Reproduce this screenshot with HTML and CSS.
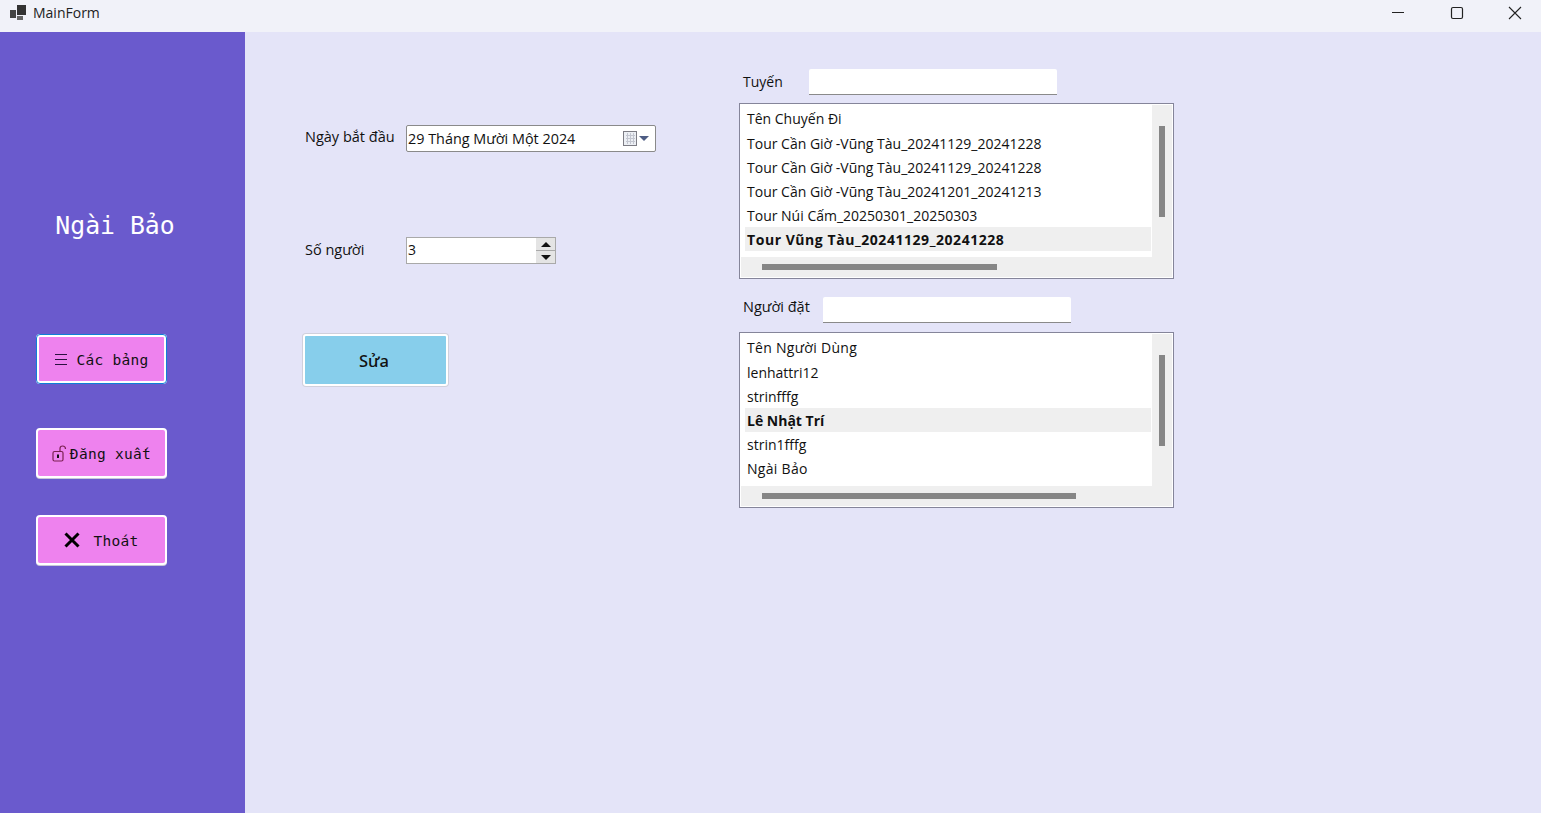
FILE: index.html
```html
<!DOCTYPE html>
<html lang="vi">
<head>
    <meta charset="UTF-8">
    <title>MainForm</title>
    <link rel="stylesheet" href="styles.css">
</head>
<body>
    <div class="titlebar">
        <svg class="app-icon" width="16" height="16" viewBox="0 0 16 16">
            <rect x="0" y="5" width="6" height="8" fill="#444"/>
            <rect x="7" y="0" width="9" height="10" fill="#333"/>
            <rect x="7" y="11" width="6" height="4" fill="#666"/>
        </svg>
        <span class="app-title">MainForm</span>
        <div class="win-controls">
            <div class="win-btn">
                <svg width="14" height="14" viewBox="0 0 14 14"><path d="M1 6.500H13" stroke="#222" fill="none"/></svg>
            </div>
            <div class="win-btn">
                <svg width="14" height="14" viewBox="0 0 14 14"><rect x="1.500" y="1.500" width="11" height="11" rx="1.500" stroke="#222" stroke-width="1.200" fill="none"/></svg>
            </div>
            <div class="win-btn">
                <svg width="14" height="14" viewBox="0 0 14 14"><path d="M1 1L13 13M13 1L1 13" stroke="#222" stroke-width="1.100" fill="none"/></svg>
            </div>
        </div>
    </div>

    <div class="main">
        <div class="sidebar">
            <div class="user-name">Ngài Bảo</div>
            <button class="side-btn active">
                <svg width="14" height="13" viewBox="0 0 14 13"><path d="M1 1.500H13M1 6.500H13M1 11.500H13" stroke="#2a1040" fill="none"/></svg>
                <span class="side-text gap-menu">Các bảng</span>
            </button>
            <button class="side-btn second">
                <svg width="16" height="17" viewBox="0 0 16 17"><rect x="1" y="6.500" width="10" height="9.500" rx="1.500" stroke="#7a2050" stroke-width="1.200" fill="none"/><path d="M8 6V3.500C8 1.500 9.500 1 10.500 1C12 1 13.500 2 13.500 4" stroke="#7a2050" stroke-width="1.200" fill="none"/><path d="M6 9.500V13" stroke="#111" stroke-width="2" fill="none"/></svg>
                <span class="side-text gap-lock">Đăng xuất</span>
            </button>
            <button class="side-btn third">
                <svg width="16" height="16" viewBox="0 0 16 16"><path d="M1.500 1.500L14.500 14.500M14.500 1.500L1.500 14.500" stroke="#000" stroke-width="3" fill="none"/></svg>
                <span class="side-text gap-exit">Thoát</span>
            </button>
        </div>

        <div class="content">
            <div class="left-col">
                <div class="field-row">
                    <label class="field-label label-date">Ngày bắt đầu</label>
                    <div class="date-box">
                        <span class="date-value">29 Tháng Mười Một 2024</span>
                        <svg width="15" height="15" viewBox="0 0 15 15">
                            <rect x="0.500" y="0.500" width="13" height="14" fill="#eceff4" stroke="#7c7c84"/>
                            <path d="M3 4.500H12M3 7.500H12M3 10.500H12M4.500 2V13M7.500 2V13M10.500 2V13" stroke="#c3c6d0" fill="none"/>
                        </svg>
                        <span class="date-arrow"></span>
                    </div>
                </div>
                <div class="field-row spin-row">
                    <label class="field-label label-spin">Số người</label>
                    <div class="spin-box">
                        <span class="spin-value">3</span>
                        <div class="spin-btns">
                            <div class="spin-btn"><span class="arrow-up"></span></div>
                            <div class="spin-btn"><span class="arrow-down"></span></div>
                        </div>
                    </div>
                </div>
                <button class="edit-btn">Sửa</button>
            </div>

            <div class="right-col">
                <div class="search-row">
                    <label class="search-label label-route">Tuyến</label>
                    <input class="search-input" type="text">
                </div>
                <div class="list-box">
                    <div class="list-body">
                        <div class="list-row first">Tên Chuyến Đi</div>
                        <div class="list-row">Tour Cần Giờ -Vũng Tàu_20241129_20241228</div>
                        <div class="list-row">Tour Cần Giờ -Vũng Tàu_20241129_20241228</div>
                        <div class="list-row">Tour Cần Giờ -Vũng Tàu_20241201_20241213</div>
                        <div class="list-row">Tour Núi Cấm_20250301_20250303</div>
                        <div class="list-row selected spaced">Tour Vũng Tàu_20241129_20241228</div>
                    </div>
                    <div class="vscroll"><div class="vthumb"></div></div>
                    <div class="hscroll"><div class="hthumb route-thumb"></div></div>
                </div>

                <div class="search-row second-search">
                    <label class="search-label label-booker">Người đặt</label>
                    <input class="search-input" type="text">
                </div>
                <div class="list-box">
                    <div class="list-body">
                        <div class="list-row first wide">Tên Người Dùng</div>
                        <div class="list-row">lenhattri12</div>
                        <div class="list-row">strinfffg</div>
                        <div class="list-row selected">Lê Nhật Trí</div>
                        <div class="list-row">strin1fffg</div>
                        <div class="list-row wide">Ngài Bảo</div>
                    </div>
                    <div class="vscroll"><div class="vthumb"></div></div>
                    <div class="hscroll"><div class="hthumb user-thumb"></div></div>
                </div>
            </div>
        </div>
    </div>
</body>
</html>
```

FILE: styles.css
```css
* {
    box-sizing: border-box;
}
body {
    margin: 0;
    height: 813px;
    overflow: hidden;
    font-family: "Open Sans", "Noto Sans", sans-serif;
    font-size: 14px;
    color: #111;
    background-color: #e4e4f8;
}
.titlebar {
    display: flex;
    align-items: center;
    height: 32px;
    padding-left: 10px;
    background-color: #f1f2f9;
}
.app-icon {
    margin-top: -6px;
}
.app-title {
    margin-left: 7px;
    margin-top: -8px;
    color: #222;
}
.win-controls {
    display: flex;
    gap: 44.5px;
    margin-left: auto;
    padding-right: 19px;
    margin-top: -6px;
}
.win-btn {
    display: flex;
    justify-content: center;
    width: 14px;
}
.main {
    display: flex;
    height: 781px;
}
.sidebar {
    display: flex;
    flex-direction: column;
    align-items: flex-start;
    width: 245px;
    padding-left: 36px;
    background-color: #6a5acd;
}
.user-name {
    width: 158px;
    margin-top: 177px;
    height: 33px;
    line-height: 33px;
    text-align: center;
    color: #fff;
    font-family: "DejaVu Sans Mono", monospace;
    font-size: 24.8px;
}
.side-btn {
    display: flex;
    align-items: center;
    justify-content: center;
    width: 131px;
    height: 50px;
    padding: 2px 0 0;
    background-color: #ee82ee;
    border: 2px solid #fff;
    border-radius: 4px;
    color: #111;
    font-family: "DejaVu Sans Mono", monospace;
    font-size: 14.5px;
    letter-spacing: 0.3px;
}
.side-btn svg {
    margin-top: -2px;
}
.side-btn.active {
    margin-top: 92px;
    border: 3px solid #fff;
    outline: 1px solid #0f7fd8;
    outline-offset: -1px;
}
.side-btn.second {
    margin-top: 44px;
    box-shadow: 0 1px 0 #c8c8d8;
}
.side-btn.third {
    margin-top: 37px;
    box-shadow: 0 1px 0 #c8c8d8;
}
.gap-menu {
    margin-left: 8px;
}
.gap-lock {
    margin-left: 2px;
}
.gap-exit {
    margin-left: 13px;
}
.content {
    display: flex;
    flex: 1;
    padding: 37px 0 0 58px;
}
.left-col {
    width: 436px;
    padding-top: 56px;
}
.field-row {
    display: flex;
    align-items: center;
    height: 27px;
    padding-left: 2px;
}
.spin-row {
    margin-top: 85px;
}
.field-label {
    width: 101px;
    font-size: 14.5px;
}
.label-date {
    margin-top: -5px;
}
.label-spin {
    margin-top: -2px;
}
.date-box {
    display: flex;
    align-items: center;
    width: 250px;
    height: 27px;
    padding: 0 6px 0 1px;
    background-color: #fff;
    border: 1px solid #8a8a8a;
    border-radius: 2px;
    font-size: 14.4px;
}
.date-value {
    flex: 1;
}
.date-arrow {
    margin-left: 1px;
    border-left: 5px solid transparent;
    border-right: 5px solid transparent;
    border-top: 5px solid #4e5d84;
}
.spin-box {
    display: flex;
    align-items: center;
    width: 150px;
    height: 27px;
    padding-left: 1px;
    background-color: #fff;
    border: 1px solid #a9a9a9;
}
.spin-value {
    flex: 1;
    margin-top: -2px;
}
.spin-btns {
    display: flex;
    flex-direction: column;
    gap: 1px;
    width: 19px;
    height: 25px;
    background-color: #a9a9a9;
}
.spin-btn {
    display: flex;
    align-items: center;
    justify-content: center;
    flex: 1;
    background-color: #e4e4e4;
}
.arrow-up {
    border-left: 5px solid transparent;
    border-right: 5px solid transparent;
    border-bottom: 5px solid #111;
}
.arrow-down {
    border-left: 5px solid transparent;
    border-right: 5px solid transparent;
    border-top: 5px solid #111;
}
.edit-btn {
    display: block;
    width: 145px;
    height: 52px;
    margin-top: 70px;
    padding: 0 3px 0 0;
    background-color: #87ceeb;
    border: 2px solid #fff;
    border-radius: 3px;
    box-shadow: 0 0 0 1px #d0d0dc;
    color: #111;
    font-family: "Noto Sans", sans-serif;
    font-size: 16.5px;
    font-weight: 500;
}
.right-col {
    width: 435px;
}
.search-row {
    display: flex;
    align-items: center;
    height: 26px;
    margin-bottom: 8px;
    padding-left: 4px;
}
.second-search {
    margin-top: 18px;
    margin-bottom: 9px;
}
.search-label {
    flex-shrink: 0;
    font-size: 14.5px;
}
.label-route {
    width: 66px;
    margin-top: -1px;
    font-size: 14px;
}
.label-booker {
    width: 80px;
    margin-top: -7px;
}
.search-input {
    width: 248px;
    height: 26px;
    padding: 0 3px;
    background-color: #fff;
    border: 0;
    border-bottom: 1px solid #8a8a8a;
    border-radius: 2px 2px 0 0;
}
.list-box {
    display: grid;
    grid-template-columns: 411px 20px;
    grid-template-rows: 152px 20px;
    width: 435px;
    height: 176px;
    padding: 1px;
    background-color: #fff;
    border: 1px solid #85859a;
}
.list-body {
    padding-top: 1px;
    background-color: #fff;
}
.list-row {
    height: 24px;
    margin: 0 1px 0 4px;
    padding-left: 2px;
    line-height: 26px;
    white-space: nowrap;
}
.list-row.first {
    height: 25px;
}
.list-row.wide {
    letter-spacing: 0.3px;
}
.list-row.selected {
    background-color: #efefef;
    font-weight: 700;
}
.list-row.spaced {
    letter-spacing: 0.55px;
}
.vscroll {
    padding: 21px 7px 0;
    background-color: #efefef;
}
.vthumb {
    height: 91px;
    background-color: #868686;
}
.hscroll {
    grid-column: 1 / 3;
    padding: 7px 0 0 21px;
    background-color: #efefef;
}
.hthumb {
    height: 6px;
    background-color: #868686;
}
.route-thumb {
    width: 235px;
}
.user-thumb {
    width: 314px;
}
```
